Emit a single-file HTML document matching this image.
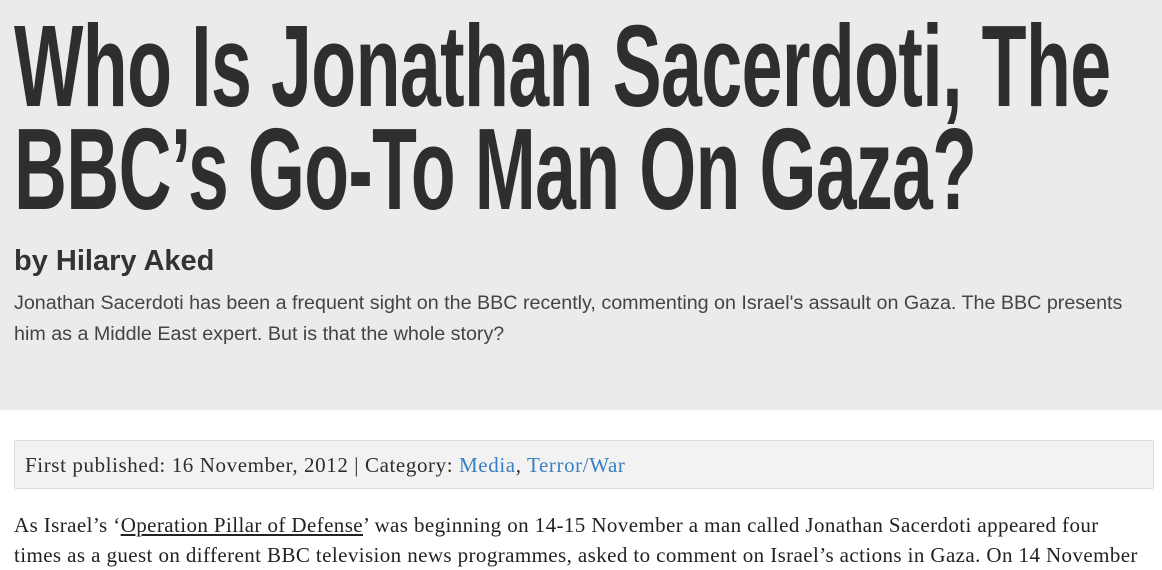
<!DOCTYPE html>
<html><head><style>
body{margin:0;width:1162px;height:553px;overflow:hidden;background:#fff;font-family:"Liberation Sans",sans-serif;color:#2e2e2e}
.hd{background:#ebebeb;height:410px;position:relative}
.t{position:absolute;left:14px;font-weight:bold;font-size:116px;line-height:116px;white-space:nowrap;transform-origin:0 0;letter-spacing:-1px}
.by{position:absolute;left:14px;top:245px;font-size:29px;font-weight:bold;color:#333}
.ds{position:absolute;left:14px;top:288px;font-size:19.7px;letter-spacing:0;line-height:31px;color:#444;white-space:nowrap}
.meta{position:absolute;left:14px;top:440px;height:49px;background:#f2f2f2;border:1px solid #ddd;border-radius:2px;font-family:"Liberation Serif",serif;font-size:21px;letter-spacing:0.6px;line-height:48px;box-sizing:border-box;width:1140px;padding-left:10px}
a{color:#3a7fc1;text-decoration:none}
.p{position:absolute;left:14px;top:510px;font-family:"Liberation Serif",serif;font-size:21px;letter-spacing:0.4px;line-height:30px;width:1140px;color:#222;white-space:nowrap}
.p u{text-decoration:underline}
</style></head><body>
<div class="hd">
<div class="t" style="top:8px;transform:scaleX(0.634)">Who Is Jonathan Sacerdoti, The</div>
<div class="t" style="top:111px;transform:scaleX(0.632)">BBC’s Go-To Man On Gaza?</div>
<div class="by">by Hilary Aked</div>
<div class="ds">Jonathan Sacerdoti has been a frequent sight on the BBC recently, commenting on Israel's assault on Gaza. The BBC presents<br>him as a Middle East expert. But is that the whole story?</div>
</div>
<div class="meta">First published: 16 November, 2012 | Category: <a>Media</a>, <a>Terror/War</a></div>
<div class="p">As Israel’s ‘<u>Operation Pillar of Defense</u>’ was beginning on 14-15 November a man called Jonathan Sacerdoti appeared four<br>times as a guest on different BBC television news programmes, asked to comment on Israel’s actions in Gaza. On 14 November</div>
</body></html>
